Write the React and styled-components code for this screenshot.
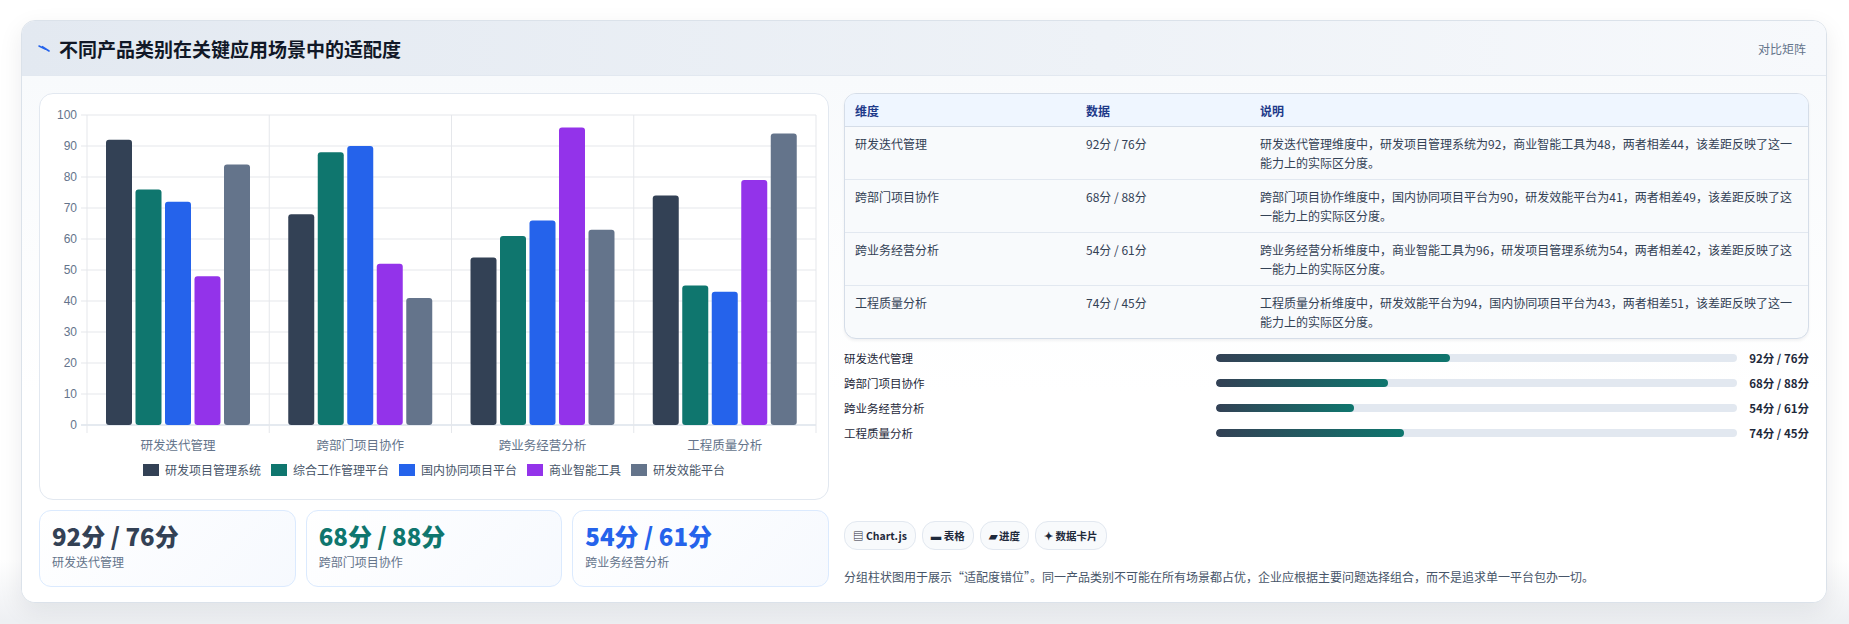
import React from 'react';
import styled, { createGlobalStyle } from 'styled-components';

const GlobalStyle = createGlobalStyle`
  html, body { margin: 0; padding: 0; background: #f3f4f6; }
  body { font-family: "Noto Sans CJK SC", "Noto Sans", sans-serif; color: #1e293b; }
`;

const Page = styled.div`
  background: linear-gradient(#ffffff 0, #ffffff 560px, #eef0f3 620px);
  height: 624px;
  padding: 20px 22px 0 21px;
  box-sizing: border-box;
`;

const Card = styled.section`
  height: 581px;
  background: #ffffff;
  border: 1px solid #dbe2ea;
  border-radius: 14px;
  box-shadow: 0 8px 24px rgba(15, 23, 42, 0.08);
  overflow: hidden;
  display: flex;
  flex-direction: column;
`;

const Header = styled.header`
  height: 54px;
  flex: none;
  display: flex;
  align-items: center;
  justify-content: space-between;
  padding: 0 20px 0 16px;
  background: linear-gradient(90deg, #e3e9f1 0%, #eef2f7 60%, #f7f9fc 100%);
  border-bottom: 1px solid #e2e8f0;
`;

const Title = styled.h2`
  margin: 0;
  display: flex;
  align-items: center;
  gap: 9px;
  font-size: 19px;
  font-weight: 700;
  color: #111827;
`;

const Tag = styled.span`
  font-size: 12px;
  color: #64748b;
`;

const Body = styled.div`
  flex: 1;
  display: grid;
  grid-template-columns: 790px 1fr;
  gap: 15px;
  padding: 17px 17px 18px 17px;
  background: linear-gradient(180deg, #f8fafc 0%, #ffffff 60%);
`;

const Column = styled.div`
  display: flex;
  flex-direction: column;
  gap: 10px;
  min-width: 0;
`;

const ChartCard = styled.div`
  height: 407px;
  box-sizing: border-box;
  background: #ffffff;
  border: 1px solid #e2e8f0;
  border-radius: 14px;
  display: flex;
  flex-direction: column;
  align-items: center;
`;

const Legend = styled.div`
  display: flex;
  gap: 10px;
  margin-top: 5px;
  font-size: 12px;
  color: #475569;
`;

const LegendItem = styled.span`
  display: flex;
  align-items: center;
  gap: 6px;
  &::before {
    content: '';
    width: 16px;
    height: 12px;
    background: ${p => p.color};
  }
`;

const Stats = styled.div`
  display: grid;
  grid-template-columns: repeat(3, 1fr);
  gap: 10px;
`;

const Stat = styled.div`
  height: 77px;
  box-sizing: border-box;
  padding: 8px 12px;
  border: 1px solid #dbeafe;
  border-radius: 12px;
  background: linear-gradient(135deg, #ffffff 0%, #f6f9fe 100%);
`;

const StatValue = styled.div`
  font-size: 24px;
  font-weight: 800;
  color: ${p => p.color};
  line-height: 34px;
`;

const StatLabel = styled.div`
  font-size: 12px;
  color: #64748b;
`;

const Table = styled.table`
  width: 100%;
  border-collapse: separate;
  border-spacing: 0;
  border: 1px solid #d5dde8;
  border-radius: 12px;
  overflow: hidden;
  background: #f8fafc;
  font-size: 12px;
  color: #334155;
  box-shadow: 0 2px 3px rgba(15, 23, 42, 0.05);
`;

const Th = styled.th`
  text-align: left;
  font-weight: 700;
  color: #1e3a8a;
  background: #eff6ff;
  height: 26px;
  padding: 3px 10px;
  border-bottom: 1px solid #d5dde8;
  width: ${p => p.w || 'auto'};
`;

const Td = styled.td`
  vertical-align: top;
  padding: 7px 10px 7px;
  height: 38px;
  line-height: 19px;
  border-top: ${p => (p.first ? 'none' : '1px solid #e2e8f0')};
`;

const Bars = styled.div`
  display: flex;
  flex-direction: column;
  gap: 8px;
  margin-top: 0;
`;

const BarRow = styled.div`
  display: grid;
  grid-template-columns: 372px 1fr 72px;
  align-items: center;
  height: 17px;
  font-size: 11.5px;
  color: #1e293b;
`;

const Track = styled.div`
  height: 8px;
  border-radius: 4px;
  background: #e2e8f0;
  overflow: hidden;
`;

const Fill = styled.div`
  height: 100%;
  border-radius: 4px;
  background: linear-gradient(90deg, #334155, #0f766e);
`;

const BarValue = styled.span`
  text-align: right;
  font-weight: 700;
`;

const Chips = styled.div`
  margin-top: auto;
  display: flex;
  gap: 6px;
`;

const Chip = styled.span`
  height: 27px;
  padding: 0 8px;
  display: flex;
  align-items: center;
  border: 1px solid #e2e8f0;
  border-radius: 13px;
  background: #f8fafc;
  font-size: 10.5px;
  font-weight: 700;
  color: #1e293b;
`;

const Note = styled.p`
  margin: 8px 0 2px;
  font-size: 12px;
  color: #475569;
`;

const colors = ['#334155', '#0f766e', '#2563eb', '#9333ea', '#64748b'];
const series = ['研发项目管理系统', '综合工作管理平台', '国内协同项目平台', '商业智能工具', '研发效能平台'];
const groups = [
  { name: '研发迭代管理', v: [92, 76, 72, 48, 84], pair: '92分 / 76分', fill: 45, desc: '研发迭代管理维度中，研发项目管理系统为92，商业智能工具为48，两者相差44，该差距反映了这一能力上的实际区分度。' },
  { name: '跨部门项目协作', v: [68, 88, 90, 52, 41], pair: '68分 / 88分', fill: 33, desc: '跨部门项目协作维度中，国内协同项目平台为90，研发效能平台为41，两者相差49，该差距反映了这一能力上的实际区分度。' },
  { name: '跨业务经营分析', v: [54, 61, 66, 96, 63], pair: '54分 / 61分', fill: 26.5, desc: '跨业务经营分析维度中，商业智能工具为96，研发项目管理系统为54，两者相差42，该差距反映了这一能力上的实际区分度。' },
  { name: '工程质量分析', v: [74, 45, 43, 79, 94], pair: '74分 / 45分', fill: 36, desc: '工程质量分析维度中，研发效能平台为94，国内协同项目平台为43，两者相差51，该差距反映了这一能力上的实际区分度。' },
];

const L = 47, R = 776, T = 21, B = 331;
const yOf = v => B - (v / 100) * (B - T);
const gw = (R - L) / 4;

const Chart = () => (
  <svg width="788" height="362" viewBox="0 0 788 362">
    {Array.from({ length: 11 }, (_, i) => i * 10).map(t => (
      <g key={t}>
        <line x1={L - 6} x2={R} y1={yOf(t)} y2={yOf(t)} stroke={t === 0 ? '#cbd5e1' : '#e5e7eb'} />
        <text x={L - 10} y={yOf(t) + 4} textAnchor="end" fontSize="12" fill="#64748b" fontFamily="Liberation Sans, sans-serif">{t}</text>
      </g>
    ))}
    {[0, 1, 2, 3, 4].map(i => (
      <line key={i} x1={L + gw * i} x2={L + gw * i} y1={T} y2={B + 8} stroke="#e5e7eb" />
    ))}
    {groups.map((g, gi) => (
      <g key={g.name}>
        {g.v.map((v, si) => {
          const x = L + gw * gi + 19 + si * 29.5;
          return <rect key={si} x={x} y={yOf(v)} width="26" height={B - yOf(v)} rx="3" fill={colors[si]} />;
        })}
        <text x={L + gw * gi + gw / 2} y={B + 25} textAnchor="middle" fontSize="12.5" fill="#64748b">{g.name}</text>
      </g>
    ))}
  </svg>
);

const Bolt = () => (
  <svg width="12" height="12" viewBox="0 0 12 12">
    <path d="M1 4 L5 6 L4 4.5 L11 9" stroke="#2563eb" strokeWidth="1.6" fill="none" strokeLinecap="round" />
  </svg>
);

const statColors = ['#334155', '#0f766e', '#2563eb'];

export default function App() {
  return (
    <Page>
      <GlobalStyle />
      <Card>
        <Header>
          <Title><Bolt />不同产品类别在关键应用场景中的适配度</Title>
          <Tag>对比矩阵</Tag>
        </Header>
        <Body>
          <Column>
            <ChartCard>
              <Chart />
              <Legend>
                {series.map((s, i) => <LegendItem key={s} color={colors[i]}>{s}</LegendItem>)}
              </Legend>
            </ChartCard>
            <Stats>
              {groups.slice(0, 3).map((g, i) => (
                <Stat key={g.name}>
                  <StatValue color={statColors[i]}>{g.pair}</StatValue>
                  <StatLabel>{g.name}</StatLabel>
                </Stat>
              ))}
            </Stats>
          </Column>
          <Column>
            <Table>
              <thead>
                <tr><Th w="211px">维度</Th><Th w="154px">数据</Th><Th>说明</Th></tr>
              </thead>
              <tbody>
                {groups.map((g, i) => (
                  <tr key={g.name}>
                    <Td first={i === 0}>{g.name}</Td>
                    <Td first={i === 0}>{g.pair}</Td>
                    <Td first={i === 0}>{g.desc}</Td>
                  </tr>
                ))}
              </tbody>
            </Table>
            <Bars>
              {groups.map(g => (
                <BarRow key={g.name}>
                  <span>{g.name}</span>
                  <Track><Fill style={{ width: `${g.fill}%` }} /></Track>
                  <BarValue>{g.pair}</BarValue>
                </BarRow>
              ))}
            </Bars>
            <Chips>
              <Chip>▤ Chart.js</Chip>
              <Chip>▬ 表格</Chip>
              <Chip>▰ 进度</Chip>
              <Chip>✦ 数据卡片</Chip>
            </Chips>
            <Note>分组柱状图用于展示“适配度错位”。同一产品类别不可能在所有场景都占优，企业应根据主要问题选择组合，而不是追求单一平台包办一切。</Note>
          </Column>
        </Body>
      </Card>
    </Page>
  );
}
